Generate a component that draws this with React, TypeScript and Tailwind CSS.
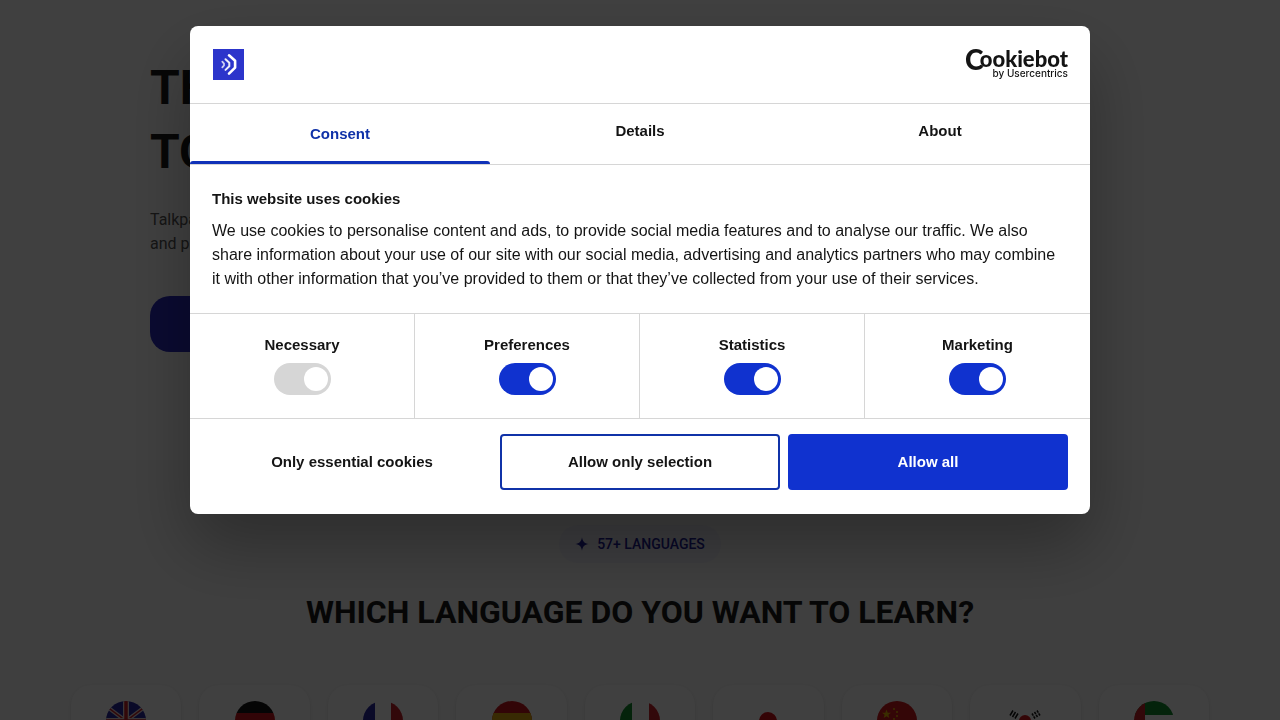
import { useState } from "react";
import type { ReactNode } from "react";

function Flag({ name, children }: { name: string; children: ReactNode }) {
  return (
    <svg viewBox="0 0 40 40" role="img" aria-label={name} className="size-10 rounded-full">
      {children}
    </svg>
  );
}

const flags: { name: string; art: ReactNode }[] = [
  {
    name: "English",
    art: (
      <>
        <rect width="40" height="40" fill="#2a2aa0" />
        <path d="M0 5L40 35M40 5L0 35" stroke="#e8d8d8" strokeWidth="4" />
        <path d="M0 5L40 35M40 5L0 35" stroke="#c8232a" strokeWidth="1.500" />
        <path d="M20 0V40M0 20H40" stroke="#e8d8d8" strokeWidth="6" />
        <path d="M20 0V40M0 20H40" stroke="#c8232a" strokeWidth="3.500" />
      </>
    ),
  },
  {
    name: "German",
    art: (
      <>
        <rect width="40" height="12" fill="#151515" />
        <rect y="12" width="40" height="15" fill="#c8171c" />
        <rect y="27" width="40" height="13" fill="#f5c400" />
      </>
    ),
  },
  {
    name: "French",
    art: (
      <>
        <rect width="40" height="40" fill="#fff" />
        <rect width="12" height="40" fill="#2a2aa0" />
        <rect x="28" width="12" height="40" fill="#c8232a" />
      </>
    ),
  },
  {
    name: "Spanish",
    art: (
      <>
        <rect width="40" height="40" fill="#c8171c" />
        <rect y="12" width="40" height="16" fill="#e0a80c" />
      </>
    ),
  },
  {
    name: "Italian",
    art: (
      <>
        <rect width="40" height="40" fill="#fff" />
        <rect width="12" height="40" fill="#128a2e" />
        <rect x="29" width="11" height="40" fill="#c8232a" />
      </>
    ),
  },
  {
    name: "Japanese",
    art: (
      <>
        <rect width="40" height="40" fill="#fff" />
        <circle cx="20" cy="20" r="9" fill="#d01018" />
      </>
    ),
  },
  {
    name: "Chinese",
    art: (
      <>
        <rect width="40" height="40" fill="#d0181c" />
        <path
          d="M9.500 8.500l1.200 3.200 3.300.1-2.600 2 .9 3.300-2.800-1.900-2.800 1.900.9-3.300-2.600-2 3.300-.1z"
          fill="#e8b400"
        />
        <g fill="#e8b400">
          <circle cx="17" cy="8" r="1" />
          <circle cx="20" cy="11" r="1" />
          <circle cx="20" cy="15" r="1" />
          <circle cx="17" cy="18" r="1" />
        </g>
      </>
    ),
  },
  {
    name: "Korean",
    art: (
      <>
        <rect width="40" height="40" fill="#fff" />
        <circle cx="20" cy="20" r="6" fill="#d0181c" />
        <path d="M14 20a6 6 0 0 0 12 0z" fill="#2a2aa0" />
        <g stroke="#111" strokeWidth="1.500">
          <path d="M5 14.500l3-5M7.500 16l3-5M10 17.500l3-5" />
          <path d="M35 14.500l-3-5M32.500 16l-3-5M30 17.500l-3-5" strokeDasharray="2.600 .7" />
        </g>
      </>
    ),
  },
  {
    name: "Arabic",
    art: (
      <>
        <rect width="40" height="40" fill="#fff" />
        <rect width="40" height="14" fill="#128a2e" />
        <rect y="27" width="40" height="13" fill="#111" />
        <rect width="11" height="40" fill="#c8232a" />
      </>
    ),
  },
];

function LandingPage() {
  return (
    <main aria-hidden="true" className="bg-white font-['Roboto',sans-serif]">
      <section className="h-[460px] px-6 pt-14">
        <div className="mx-auto max-w-[980px]">
          <h1 className="text-5xl leading-[64px] font-bold text-[#1a1a1a]">
            TH
            <br />
            TO
          </h1>
          <p className="mt-6 leading-6 text-[#555]">
            Talkpal
            <br />
            and pra
          </p>
          <div className="mt-10 h-14 w-60 rounded-[20px] bg-[#2a2ac0]" />
        </div>
      </section>
      <section className="flex flex-col items-center bg-[#f9f9f9] px-6 pt-[65px]">
        <p className="flex h-[38px] items-center gap-2 rounded-full bg-[#f0f0fa] px-4 text-sm font-medium text-[#20209a]">
          <svg viewBox="0 0 14 14" className="size-3.5 fill-current">
            <path d="M7 .3C7.700 4.600 9.400 6.300 13.700 7C9.400 7.700 7.700 9.400 7 13.700C6.300 9.400 4.600 7.700.3 7C4.600 6.300 6.300 4.600 7 .3Z" />
          </svg>
          57+ LANGUAGES
        </p>
        <h2 className="mt-7 text-[32px] leading-[42px] font-bold text-[#1a1a1a]">
          WHICH LANGUAGE DO YOU WANT TO LEARN?
        </h2>
        <ul className="mt-[52px] grid w-full max-w-[1138px] grid-cols-9 gap-[18px]">
          {flags.map((f) => (
            <li key={f.name} className="flex h-32 justify-center rounded-[20px] bg-white pt-4 shadow-sm">
              <Flag name={f.name}>{f.art}</Flag>
            </li>
          ))}
        </ul>
      </section>
    </main>
  );
}

function SiteLogo() {
  return (
    <svg viewBox="0 0 31 31" role="img" aria-label="Talkpal" className="size-[31px]">
      <rect width="31" height="31" fill="#2c35cb" />
      <g fill="none" stroke="#fff" strokeLinecap="round" strokeLinejoin="round">
        <path d="M16 6.300L22.100 11.800V18.600L16 24.700" strokeWidth="2.600" />
        <path d="M12.500 10.300L16.300 13.800V17.200L12.500 20.900" strokeWidth="2" opacity=".9" />
        <path d="M9.300 12.600L11 14.600V16.400L9.300 18.400" strokeWidth="1.800" opacity=".75" />
      </g>
    </svg>
  );
}

function CookiebotLogo() {
  return (
    <a href="#cookiebot" className="block">
      <svg viewBox="0 -8 103 48" className="h-12 w-[103px] fill-[#141414]">
        <text x="0" y="21" className="font-['Lato',sans-serif] text-[28px] font-black">
          C
        </text>
        <text x="103" y="18" textAnchor="end" className="font-['Lato',sans-serif] text-[22px] font-black">
          ookiebot
        </text>
        <text x="103" y="28" textAnchor="end" className="font-['Inter',sans-serif] text-[10px] font-medium">
          by Usercentrics
        </text>
      </svg>
    </a>
  );
}

const tabs = ["Consent", "Details", "About"];
const categories = ["Necessary", "Preferences", "Statistics", "Marketing"];

function CookieDialog() {
  const [active, setActive] = useState("Consent");
  return (
    <div
      role="dialog"
      aria-modal="true"
      aria-labelledby="cookie-title"
      className="w-full max-w-[900px] overflow-hidden rounded-lg bg-white font-['Liberation_Sans',Arial,sans-serif] text-[15px] text-[#141414] shadow-[0_32px_68px_rgba(0,0,0,0.3)]"
    >
      <header className="flex h-[78px] items-center justify-between border-b border-[#d6d6d6] pr-[22px] pl-[23px]">
        <SiteLogo />
        <CookiebotLogo />
      </header>
      <div role="tablist" className="grid grid-cols-3 border-b border-[#d6d6d6]">
        {tabs.map((t) => (
          <button
            key={t}
            role="tab"
            aria-selected={t === active}
            onClick={() => setActive(t)}
            className={
              t === active
                ? "flex h-[60px] flex-col justify-between pt-[19px] font-bold text-[#1032a8] after:h-[3px] after:w-full after:rounded-t-[3px] after:bg-[#1032b8]"
                : "h-[60px] pb-1.5 font-bold"
            }
          >
            <span className="w-full">{t}</span>
          </button>
        ))}
      </div>
      <div className="py-[22px] pr-[30px] pl-[22px] leading-6">
        <h2 id="cookie-title" className="mb-2 font-bold">
          This website uses cookies
        </h2>
        <p className="text-base leading-6">
          We use cookies to personalise content and ads, to provide social media features and to analyse our traffic. We also
          share information about your use of our site with our social media, advertising and analytics partners who may combine
          it with other information that you’ve provided to them or that they’ve collected from your use of their services.
        </p>
      </div>
      <fieldset className="grid grid-cols-4 divide-x divide-[#d6d6d6] border-y border-[#d6d6d6]">
        {categories.map((c) => (
          <label key={c} className="flex flex-col items-center pt-[19px] pb-[23px] leading-6 font-bold">
            {c}
            <input
              type="checkbox"
              defaultChecked
              disabled={c === "Necessary"}
              className="mt-1.5 flex h-8 w-[57px] appearance-none items-center rounded-full bg-[#1032cf] px-[3px] before:size-6 before:rounded-full before:bg-white checked:justify-end disabled:bg-[#d6d6d6]"
            />
          </label>
        ))}
      </fieldset>
      <div className="grid grid-cols-3 gap-2 px-[22px] pt-[15px] pb-6 font-bold">
        <button className="h-14 rounded">Only essential cookies</button>
        <button className="h-14 rounded border-2 border-[#1032a8]">Allow only selection</button>
        <button className="h-14 rounded bg-[#1032cf] text-white">Allow all</button>
      </div>
    </div>
  );
}

export default function App() {
  return (
    <div className="relative h-screen overflow-hidden">
      <LandingPage />
      <div className="fixed inset-0 flex items-start justify-center bg-black/75 px-4 pt-[26px]">
        <CookieDialog />
      </div>
    </div>
  );
}
